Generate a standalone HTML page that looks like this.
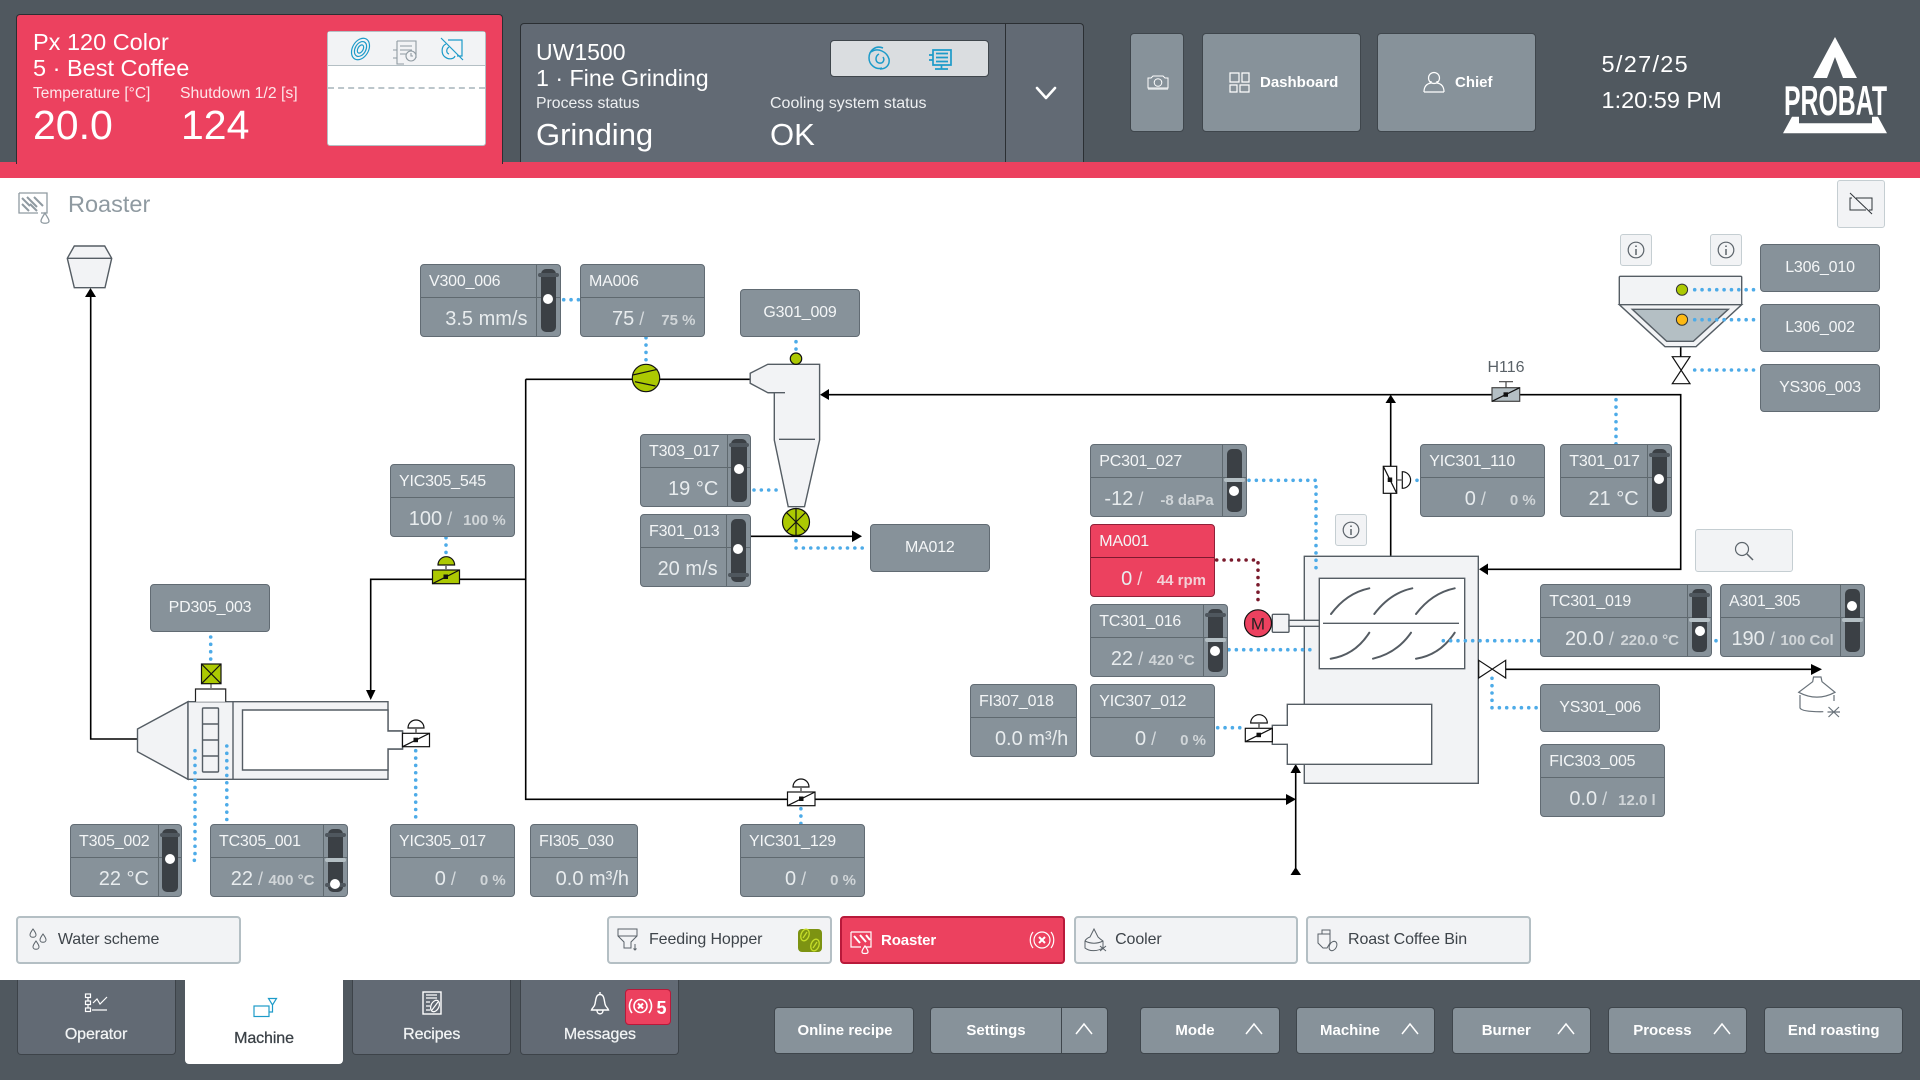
<!DOCTYPE html>
<html><head><meta charset="utf-8"><title>Roaster</title>
<style>
*{box-sizing:border-box}
html,body{margin:0;padding:0;width:1920px;height:1080px;overflow:hidden;background:#fff;font-family:"Liberation Sans",sans-serif}
.a{position:absolute}
.x{position:absolute;white-space:nowrap;line-height:1}
#dia,#ico{position:absolute;left:0;top:0;width:1920px;height:1080px}
#dia{z-index:1}#ico{z-index:5;pointer-events:none}
.p{position:absolute;z-index:2;height:72.5px;background:#87929a;border:1px solid #616b73;border-radius:4px;color:#f4f6f7}
.p .t{height:33px;border-bottom:1px solid #5f696f;padding-left:8px;font-size:16px;letter-spacing:-.2px;line-height:33px;white-space:nowrap}
.p .v{position:absolute;right:8px;top:35px;line-height:38px;font-size:20px;color:#e8ecee;white-space:nowrap}
.p.s .v{right:32px}
.v i{font-style:normal;font-size:18px;color:#d4d9dc;margin-left:5px}
.v b{display:inline-block;text-align:right;font-size:15px;color:#d0d5d8;font-weight:bold}
.p.r{background:#ec415f;border-color:#8f2038}
.p.r .t{border-color:#7c1a30}
.p.r .v b{color:#f3d0d6}.p.r .v i{color:#f6d5da}
.sb{position:absolute;right:0;top:0;bottom:0;width:23.5px;border-left:1px solid #5f696f}
.tr{position:absolute;left:3.5px;right:3.5px;top:3.5px;bottom:3.5px;background:#3b4045;border-radius:5px}
.dk,.lt{position:absolute;left:-2.5px;right:-2.5px;height:4px;border-radius:2px;background:#4f575e}
.lt{background:#b4bfc4}
.dt{position:absolute;left:50%;width:10px;height:10px;margin-left:-5px;border-radius:50%;background:#fff}
.q{position:absolute;z-index:2;height:48px;background:#87929a;border:1px solid #616b73;border-radius:4px;color:#f4f6f7;font-size:16px;letter-spacing:-.2px;text-align:center;line-height:46px}
.ib{position:absolute;z-index:2;width:31.5px;height:31.5px;background:#f2f3f5;border:1px solid #c5ced2;border-radius:3px}
.tb{position:absolute;z-index:2;top:916px;height:47.5px;background:#f2f3f5;border:2px solid #b4bfc4;border-radius:4px;color:#3e444a;font-size:16px;letter-spacing:-.1px;line-height:44px;white-space:nowrap}
.nav{position:absolute;z-index:2;top:980px;width:159px;height:74.5px;background:#626a74;border:1px solid #3d4349;border-top:0;border-radius:0 0 4px 4px;color:#f2f4f5;font-size:16px;letter-spacing:-.1px;-webkit-text-stroke:.25px currentColor;text-align:center;padding-top:46px;line-height:18px}
.bb{position:absolute;z-index:2;top:1006.5px;height:47px;background:#87929a;border:1px solid #3f464c;border-radius:4px;color:#fff;font-size:15px;font-weight:bold;line-height:46px;white-space:nowrap}
.bb span{position:absolute;top:0;transform:translateX(-50%)}
.hb{position:absolute;z-index:2;top:32.5px;height:99px;background:#87929a;border:1px solid #3f464c;border-radius:4px;color:#fff;font-size:15px;font-weight:bold}
</style></head><body>

<!-- header -->
<div class="a" style="left:0;top:0;width:1920px;height:162px;background:#50585f"></div>
<div class="a" style="left:0;top:162px;width:1920px;height:16px;background:#ec415f"></div>
<div class="a" style="left:16px;top:14px;width:487px;height:150px;background:#ec415f;border:1px solid #2b2f33;border-bottom:0;border-radius:4px 4px 0 0"></div>
<div class="a" style="left:519.5px;top:23px;width:564.5px;height:139px;background:#626a74;border:1px solid #2b2f33;border-bottom:0;border-radius:4px 4px 0 0"></div>
<div class="a" style="left:1005px;top:23px;width:1px;height:139px;background:#2b2f33"></div>

<div class="x" style="left:33px;top:31px;font-size:23.5px;color:#fff">Px 120 Color</div>
<div class="x" style="left:33px;top:57px;font-size:23.5px;color:#fff">5 · Best Coffee</div>
<div class="x" style="left:33px;top:86px;font-size:15.5px;color:#fde6ea">Temperature [°C]</div>
<div class="x" style="left:180px;top:86px;font-size:15.8px;color:#fde6ea">Shutdown 1/2 [s]</div>
<div class="x" style="left:33px;top:105px;font-size:41px;color:#fff">20.0</div>
<div class="x" style="left:181px;top:105px;font-size:41px;color:#fff">124</div>

<div class="a" style="left:326.5px;top:31px;width:159px;height:115px;background:#fff;border:1px solid #b4bfc4;border-radius:3px"></div>
<div class="a" style="left:327.5px;top:32px;width:157px;height:34px;background:#f2f3f5;border-bottom:1.5px solid #b4bfc4"></div>
<div class="a" style="left:327.5px;top:87px;width:157px;border-top:2px dashed #bcc6cb"></div>

<div class="x" style="left:536px;top:41px;font-size:23px;color:#fff">UW1500</div>
<div class="x" style="left:536px;top:67px;font-size:23.2px;color:#fff">1 · Fine Grinding</div>
<div class="x" style="left:536px;top:95.5px;font-size:15.8px;color:#eef0f2">Process status</div>
<div class="x" style="left:770px;top:95.5px;font-size:16px;color:#eef0f2">Cooling system status</div>
<div class="x" style="left:536px;top:119px;font-size:31px;color:#fff">Grinding</div>
<div class="x" style="left:770px;top:119px;font-size:31px;color:#fff">OK</div>
<div class="a" style="left:830px;top:40px;width:158.5px;height:37px;background:#dadde0;border:1px solid #3f464c;border-radius:4px"></div>

<div class="hb" style="left:1130px;width:54px"></div>
<div class="hb" style="left:1201.5px;width:159px"><span class="x" style="left:57.5px;top:41.5px">Dashboard</span></div>
<div class="hb" style="left:1377px;width:159px"><span class="x" style="left:77px;top:41.5px">Chief</span></div>
<div class="x" style="left:1601.5px;top:53px;font-size:23.5px;letter-spacing:1.3px;color:#fff">5/27/25</div>
<div class="x" style="left:1601.5px;top:89px;font-size:23.5px;color:#fff">1:20:59 PM</div>

<!-- title row -->
<div class="x" style="left:68px;top:193px;font-size:23.5px;color:#8f9aa1">Roaster</div>
<div class="a" style="left:1837px;top:180px;width:48px;height:47.5px;background:#f2f3f5;border:1px solid #c5ced2;border-radius:3px"></div>

<!-- diagram -->
<svg id="dia" viewBox="0 0 1920 1080" xmlns="http://www.w3.org/2000/svg">
<g fill="none" stroke="#000" stroke-width="1.6">
<path d="M90.7 296V739H138"/>
<path d="M370.7 691V579.3H525.7"/>
<path d="M525.7 379.3V799.3H1288"/>
<path d="M525.7 379.3H750"/>
<path d="M828 394.7H1680.7V569.3H1488"/>
<path d="M1390.7 400V556.3"/>
<path d="M751 536.3H853"/>
<path d="M1505.7 669.3H1812"/>
<path d="M1295.7 772V875"/>
<path d="M1680.7 346.7V357"/>
</g>
<g fill="#000">
<path d="M85 297L90.5 288L96 297Z"/>
<path d="M366 690H375.5L370.7 700Z"/>
<path d="M829 389L820 394.7L829 400Z"/>
<path d="M852 530.5L862 536.3L852 542Z"/>
<path d="M1385.5 403L1390.7 394.7L1396 403Z"/>
<path d="M1488 563.5L1479 569.3L1488 575Z"/>
<path d="M1811 664L1822 669.3L1811 675Z"/>
<path d="M1286 794L1296 799.3L1286 805Z"/>
<path d="M1290.5 773L1295.7 764L1301 773Z"/>
<path d="M1290.5 875L1295.7 867L1301 875Z"/>
</g>
<!-- top cone -->
<g fill="#f2f3f5" stroke="#555d64" stroke-width="1.4">
<path d="M74.3 246H104.7L111.7 258.3L105 287.7H74.3L67.3 258.3Z"/>
<path d="M67.3 258.3H111.7" fill="none"/>
<!-- drum -->
<path d="M137.5 729L188 701.7V779.3L137.5 751.7Z"/>
<path d="M188 701.7H388V731H402.5V749H388V779.3H188Z"/>
<path d="M233 701.7V779.3" fill="none"/>
<path d="M388 710H242.5V770H388V749H402.5V731H388Z" fill="#fff"/>
<rect x="202.5" y="708" width="16" height="64" rx="1" fill="none"/>
<path d="M202.5 724H218.5M202.5 740H218.5M202.5 756H218.5" fill="none"/>
<!-- cyclone -->
<path d="M750.2 373.3L767.8 364.3H819.6V440L804.5 506.7H788.2L774.3 440V392.7H767.8L750.2 383.3Z"/>
<path d="M767.8 392.7H785M779 439.3H815" fill="none"/>
<!-- roaster -->
<rect x="1304.3" y="556.3" width="174" height="227"/>
<rect x="1319.3" y="578.3" width="145.4" height="90.4" fill="#fff"/>
<path d="M1323 623.3H1459" fill="none"/>
<path d="M1287.3 704.3H1431.7V764.3H1287.3V744.3H1272.3V725.3H1287.3Z" fill="#fff"/>
<rect x="1272.3" y="614.3" width="16.7" height="18" rx="1"/>
<path d="M1289 620.3H1319.3V626.3H1289Z"/>
<!-- hopper -->
<rect x="1619.3" y="276.3" width="122.4" height="28.4" rx="1"/>
<path d="M1619.3 304.7H1741.7L1696 346.7H1665Z"/>
<path d="M1632.3 309.3H1728.3L1693.3 341.3H1666.7Z" fill="#b4bfc4"/>
</g>
<g fill="none" stroke="#555c63" stroke-width="2" stroke-linecap="round">
<path d="M1331 614Q1346.7 593 1369.3 588.3M1374.3 614Q1390 593 1412.3 588.3M1416 614Q1432 593 1454.7 588.3"/>
<path d="M1330.7 658.7Q1355 655 1369.3 632.7M1373 658.7Q1397 653 1411 632.7M1416 658.7Q1440 655 1454.7 632.7"/>
</g>
<!-- drum hood -->
<path d="M195.5 701.7V689H225.7V701.7" fill="#fff" stroke="#222" stroke-width="1.2"/>
<path d="M211 689V683" stroke="#777" stroke-width="1.5"/>
<g stroke="#111" stroke-width="1.2">
<rect x="201.5" y="664" width="19.5" height="19.7" fill="#acc902"/>
<path d="M201.5 664L221 683.7M221 664L201.5 683.7" fill="none"/>
<!-- green valve -->
<rect x="432.5" y="570" width="27" height="13.7" fill="#acc902"/>
<path d="M432.5 583.7L459.5 570" fill="none"/>
<path d="M438 565A8.3 8.3 0 0 1 454.6 565Z" fill="#acc902"/>
<rect x="443.5" y="574.5" width="4.5" height="4.5" fill="#111" stroke="none"/>
<!-- fan -->
<ellipse cx="646" cy="378" rx="13.7" ry="13.7" fill="#acc902"/>
<path d="M632.6 375L657.5 369.3M635 381.7L655.5 386" fill="none"/>
<!-- rotary -->
<circle cx="796" cy="522" r="13.5" fill="#acc902"/>
<path d="M796 508.5V535.5M786.5 512.5L805.5 531.5M805.5 512.5L786.5 531.5" fill="none"/>
<circle cx="796" cy="358.7" r="5.7" fill="#acc902"/>
<!-- motor -->
<circle cx="1258" cy="623.3" r="13.5" fill="#ec415f"/>
<!-- white valves -->
<rect x="402.5" y="733.3" width="27" height="13.4" fill="#fff"/>
<path d="M402.5 746.7L429.5 733.3" fill="none"/>
<rect x="787.5" y="792" width="27.5" height="13.7" fill="#fff"/>
<path d="M787.5 805.7L815 792" fill="none"/>
<rect x="1245.3" y="728.3" width="27" height="13.4" fill="#fff"/>
<path d="M1245.3 741.7L1272.3 728.3" fill="none"/>
<rect x="1383.3" y="466.3" width="13.4" height="27" fill="#fff"/>
<path d="M1383.3 466.3L1396.7 493.3" fill="none"/>
<path d="M408 728A8 8 0 0 1 424 728ZM793 787A8 8 0 0 1 809 787ZM1250.7 723A8.3 8.3 0 0 1 1267.3 723ZM1402.3 471.7A8.3 8.3 0 0 1 1402.3 488.3Z" fill="#fff"/>
<path d="M1478.7 660.3V678L1505.7 660.3V678Z" fill="#fff"/>
<path d="M1672.3 356.7H1690L1672.3 383.7H1690Z" fill="#fff"/>
<rect x="1492" y="387.7" width="27.7" height="13.6" fill="#b4bfc4" stroke="#444"/>
<path d="M1492 401.3L1519.7 387.7" fill="none"/>
<path d="M1499 381.7H1513M1506 381.7V387.7" fill="none" stroke="#444"/>
<path d="M416 728V733.3M801 787V792M1259 723V728.3M1396.7 480H1402.3M446 565V570" fill="none" stroke="#666" stroke-width="1.6"/>
</g>
<g fill="#111">
<rect x="413.5" y="737.7" width="4.5" height="4.5"/><rect x="799" y="796.5" width="4.5" height="4.5"/><rect x="1256.5" y="732.7" width="4.5" height="4.5"/><rect x="1387.7" y="477.5" width="4.5" height="4.5"/><rect x="1503.5" y="392.3" width="4.5" height="4.5"/>
</g>
<circle cx="1682" cy="289.7" r="5.6" fill="#acc902" stroke="#333"/>
<circle cx="1682" cy="319.7" r="5.6" fill="#fdb913" stroke="#333"/>
<!-- bin -->
<g fill="none" stroke="#69727a" stroke-width="1.2">
<path d="M1812.7 681.7L1813.5 677H1821L1822 681.7L1835 692.3Q1817 702 1798.7 692.3Z"/>
<path d="M1800 695V708Q1802 712 1823.3 711.7M1834 695V701"/>
<path d="M1828.5 707L1839 717M1839 707L1828.5 717M1827.5 712H1840"/>
</g>
<!-- dotted -->
<g fill="none" stroke="#4dabe8" stroke-width="3.6" stroke-linecap="round" stroke-dasharray="0 7.35">
<path d="M210.7 637V660"/>
<path d="M195 750.7V860.3H187"/>
<path d="M226.8 746V820"/>
<path d="M415.7 750.7V824"/>
<path d="M446 537.7V553"/>
<path d="M563.7 299.7H580"/>
<path d="M646 337.7V360"/>
<path d="M796 341.7V350"/>
<path d="M754 490H781"/>
<path d="M796 540.7V548H866"/>
<path d="M1249 480.3H1316V568.3"/>
<path d="M1229 649.7H1311"/>
<path d="M1443.3 640.7H1540"/>
<path d="M1217.7 727.7H1242"/>
<path d="M1492 678.3V707.7H1537"/>
<path d="M800.9 808.7V824"/>
<path d="M1417 480.3H1418"/>
<path d="M1694.7 289.7H1760"/>
<path d="M1694.7 319.7H1757"/>
<path d="M1694.7 370H1757"/>
<path d="M1616 399.7V444"/>
<path d="M1716 640.7H1717"/>
</g>
<path d="M1216.7 560H1258V604.3" fill="none" stroke="#7a1a2c" stroke-width="3.6" stroke-linecap="round" stroke-dasharray="0 7.35"/>
<text x="1258" y="629.5" font-size="17" text-anchor="middle" fill="#222" font-family="Liberation Sans, sans-serif">M</text>
<text x="1506" y="372" font-size="16" text-anchor="middle" fill="#5a6268" font-family="Liberation Sans, sans-serif">H116</text>
</svg>

<!-- panels -->
<div class="p s" style="left:420px;top:264px;width:140.5px"><div class="t">V300_006</div><div class="v">3.5 mm/s</div><div class="sb"><div class="tr"><div class="dk" style="top:4.5px"></div><div class="dt" style="top:25.5px"></div></div></div></div>
<div class="p" style="left:580px;top:264px;width:124.5px"><div class="t">MA006</div><div class="v">75<i>/</i><b style="margin-left:17px">75 %</b></div></div>
<div class="q" style="left:740px;top:289px;width:120px">G301_009</div>
<div class="p" style="left:390px;top:464px;width:124.7px"><div class="t">YIC305_545</div><div class="v">100<i>/</i><b style="margin-left:11px">100 %</b></div></div>
<div class="p s" style="left:640px;top:434.3px;width:111.3px"><div class="t">T303_017</div><div class="v">19 °C</div><div class="sb"><div class="tr"><div class="dk" style="top:4.5px"></div><div class="dt" style="top:25.5px"></div></div></div></div>
<div class="p s" style="left:640px;top:514.3px;width:110.6px"><div class="t">F301_013</div><div class="v">20 m/s</div><div class="sb"><div class="tr"><div class="dk" style="top:54.5px"></div><div class="dt" style="top:25.5px"></div></div></div></div>
<div class="q" style="left:870px;top:524px;width:119.6px">MA012</div>
<div class="q" style="left:150px;top:584px;width:120px">PD305_003</div>

<div class="p s" style="left:70px;top:824.3px;width:112px"><div class="t">T305_002</div><div class="v">22 °C</div><div class="sb"><div class="tr"><div class="dk" style="top:4.5px"></div><div class="dt" style="top:25.5px"></div></div></div></div>
<div class="p s" style="left:210px;top:824.3px;width:137.5px"><div class="t">TC305_001</div><div class="v">22<i>/</i><b style="margin-left:5.5px">400 °C</b></div><div class="sb"><div class="tr"><div class="dk" style="top:4.5px"></div><div class="lt" style="top:29.5px"></div><div class="dk" style="top:54.5px"></div><div class="dt" style="top:50.5px"></div></div></div></div>
<div class="p" style="left:390px;top:824.3px;width:124.7px"><div class="t">YIC305_017</div><div class="v">0<i>/</i><b style="margin-left:24px">0 %</b></div></div>
<div class="p" style="left:530px;top:824.3px;width:108px"><div class="t">FI305_030</div><div class="v">0.0 m³/h</div></div>
<div class="p" style="left:740px;top:824.3px;width:125px"><div class="t">YIC301_129</div><div class="v">0<i>/</i><b style="margin-left:24px">0 %</b></div></div>

<div class="p s" style="left:1090.3px;top:444.3px;width:156.4px"><div class="t">PC301_027</div><div class="v">-12<i>/</i><b style="margin-left:17px">-8 daPa</b></div><div class="sb"><div class="tr"><div class="lt" style="top:29.5px"></div><div class="dt" style="top:37.5px"></div></div></div></div>
<div class="p r" style="left:1090.3px;top:524.3px;width:124.7px"><div class="t">MA001</div><div class="v">0<i>/</i><b style="margin-left:14.5px">44 rpm</b></div></div>
<div class="p s" style="left:1090.3px;top:604.3px;width:137.4px"><div class="t">TC301_016</div><div class="v">22<i>/</i><b style="margin-left:5.5px">420 °C</b></div><div class="sb"><div class="tr"><div class="dk" style="top:4.5px"></div><div class="lt" style="top:29.5px"></div><div class="dt" style="top:37.5px"></div></div></div></div>
<div class="p" style="left:970px;top:684.3px;width:107.3px"><div class="t">FI307_018</div><div class="v">0.0 m³/h</div></div>
<div class="p" style="left:1090.3px;top:684.3px;width:124.7px"><div class="t">YIC307_012</div><div class="v">0<i>/</i><b style="margin-left:24px">0 %</b></div></div>
<div class="p" style="left:1420.3px;top:444.3px;width:124.4px"><div class="t">YIC301_110</div><div class="v">0<i>/</i><b style="margin-left:24px">0 %</b></div></div>
<div class="p s" style="left:1560.3px;top:444.3px;width:111.4px"><div class="t">T301_017</div><div class="v">21 °C</div><div class="sb"><div class="tr"><div class="dk" style="top:4.5px"></div><div class="dt" style="top:25.5px"></div></div></div></div>
<div class="p s" style="left:1540.3px;top:584.3px;width:171.7px"><div class="t">TC301_019</div><div class="v">20.0<i>/</i><b style="margin-left:6.5px">220.0 °C</b></div><div class="sb"><div class="tr"><div class="dk" style="top:4.5px"></div><div class="lt" style="top:29.5px"></div><div class="dt" style="top:37.5px"></div></div></div></div>
<div class="p s" style="left:1720px;top:584.3px;width:144.7px"><div class="t">A301_305</div><div class="v" style="right:30px">190<i>/</i><b style="margin-left:5.5px">100 Col</b></div><div class="sb"><div class="tr"><div class="lt" style="top:29.5px"></div><div class="dt" style="top:12.5px"></div></div></div></div>
<div class="q" style="left:1540.3px;top:684.3px;width:119.7px">YS301_006</div>
<div class="p" style="left:1540.3px;top:744.3px;width:124.4px"><div class="t">FIC303_005</div><div class="v">0.0<i>/</i><b style="margin-left:11px">12.0 l</b></div></div>
<div class="q" style="left:1760.3px;top:244px;width:119.4px">L306_010</div>
<div class="q" style="left:1760.3px;top:304.3px;width:119.4px">L306_002</div>
<div class="q" style="left:1760.3px;top:364.3px;width:119.4px">YS306_003</div>

<div class="ib" style="left:1335.3px;top:514.3px"></div>
<div class="ib" style="left:1620.3px;top:234.3px"></div>
<div class="ib" style="left:1710.3px;top:234.3px"></div>
<div class="a" style="z-index:2;left:1695px;top:529.3px;width:98px;height:43px;background:#f2f3f5;border:1px solid #c5ced2;border-radius:3px"></div>

<!-- sub tabs -->
<div class="tb" style="left:16.4px;width:224.6px;padding-left:39.5px">Water scheme</div>
<div class="tb" style="left:607px;width:224.7px;padding-left:40px">Feeding Hopper</div>
<div class="a" style="z-index:3;left:798px;top:928.5px;width:24px;height:23.5px;background:#7d9312;border-radius:4px"></div>
<div class="tb" style="left:840px;width:225px;padding-left:39px;background:#ec415f;border-color:#b8193a;color:#fff;font-weight:bold;font-size:15px;line-height:45px">Roaster</div>
<div class="tb" style="left:1073.6px;width:224px;padding-left:39.5px">Cooler</div>
<div class="tb" style="left:1306px;width:224.6px;padding-left:40px">Roast Coffee Bin</div>

<!-- bottom bar -->
<div class="a" style="left:0;top:980px;width:1920px;height:100px;background:#50585f"></div>
<div class="nav" style="left:16.5px">Operator</div>
<div class="nav" style="left:185px;width:158px;height:83.5px;background:#fff;color:#3a4046;border-color:#fff;padding-top:50px">Machine</div>
<div class="nav" style="left:352.2px">Recipes</div>
<div class="nav" style="left:520.4px">Messages</div>
<div class="a" style="z-index:3;left:625px;top:989px;width:46px;height:36px;background:#ec415f;border:1px solid #b8193a;border-radius:4px"></div>
<div class="x" style="z-index:6;left:656.5px;top:998.5px;font-size:18px;font-weight:bold;color:#fff">5</div>

<div class="bb" style="left:774px;width:140px"><span style="left:70px">Online recipe</span></div>
<div class="bb" style="left:930px;width:178px"><span style="left:65px">Settings</span><div class="a" style="left:130px;top:0;bottom:0;width:1px;background:#3f464c"></div></div>
<div class="bb" style="left:1140px;width:140px"><span style="left:54px">Mode</span></div>
<div class="bb" style="left:1296px;width:139px"><span style="left:53px">Machine</span></div>
<div class="bb" style="left:1452.3px;width:139px"><span style="left:53px">Burner</span></div>
<div class="bb" style="left:1608.4px;width:139px"><span style="left:53px">Process</span></div>
<div class="bb" style="left:1763.7px;width:139.3px"><span style="left:69px">End roasting</span></div>

<!-- icons overlay -->
<svg id="ico" viewBox="0 0 1920 1080" xmlns="http://www.w3.org/2000/svg">
<g fill="none" stroke="#fff" stroke-width="2.6" stroke-linecap="round" stroke-linejoin="round"><path d="M1037 88L1046 98L1055 88"/></g>
<!-- chevrons up -->
<g fill="none" stroke="#fff" stroke-width="1.5">
<path d="M1076 1034L1084 1024L1092 1034M1246 1034L1254 1024L1262 1034M1402 1034L1410 1024L1418 1034M1558 1034L1566 1024L1574 1034M1714 1034L1722 1024L1730 1034"/>
</g>
<!-- mini panel icons -->
<g fill="none" stroke="#1d9bc9" stroke-width="1.2">
<g transform="rotate(30 360.5 49)">
<ellipse cx="360.5" cy="49" rx="8" ry="11.5"/>
<ellipse cx="360.5" cy="49" rx="5.3" ry="8"/>
<ellipse cx="360.5" cy="49" rx="2.6" ry="4.5"/>
</g>
<path d="M441 38L463 60M448 40H462V56H457"/>
<path d="M446 44C441 46 441 54 445 57C449 60 454 59 455 56M449 47C446 49 446 53 449 54"/>
<g stroke-width="1.5">
<path d="M883 48C876 45 869 50 869 58C869 65 876 70 882 68M871 52C878 47 887 52 889 59C890 65 886 69 880 69"/>
<path d="M879 54C875 56 875 62 879 63C883 64 885 60 883 57"/>
</g>
<g stroke-width="1.7">
<path d="M933 50H951V65H933ZM936 53.5H948M936 57.5H948M936 61.5H948M941.5 65V69M935 69H948M929 55H933V60H929"/>
</g>
</g>
<g fill="none" stroke="#8f9aa1" stroke-width="1.1">
<path d="M397 41H416V58M397 41V64H404M400 46H412M400 50H412M400 54H412M393 50H397M393 58H397"/>
<circle cx="411" cy="56" r="5" fill="#f2f3f5"/><path d="M411 53V56H413"/>
</g>
<!-- header button icons -->
<g fill="none" stroke="#fff" stroke-width="1">
<path d="M1148 78H1151L1153 76H1163L1165 78H1168V88H1148Z"/><circle cx="1158" cy="82.5" r="3.8"/><path d="M1148 89H1168" stroke-width="1.6" stroke="#dfe3e5"/>
</g>
<g fill="none" stroke="#fff" stroke-width="1.2">
<path d="M1230 73H1239V82H1230ZM1242 73H1249V82H1242ZM1230 85H1237V92H1230ZM1240 85H1249V92H1240Z"/>
<circle cx="1434" cy="78" r="5.5"/><path d="M1424 92C1424 85 1428 83.5 1431 83L1431 81M1444 92C1444 85 1440 83.5 1437 83L1437 81M1424 92H1444"/>
</g>
<!-- logo -->
<g fill="#fff">
<path d="M1835 37L1857 78H1843L1835 57L1827 78H1813Z"/>
<path d="M1792 116.7L1783 133.3H1887L1878 116.7H1872V123.3H1799V116.7Z"/>
<text x="1784" y="115" font-size="42" font-weight="bold" font-family="Liberation Sans Narrow, Liberation Sans, sans-serif" textLength="103" lengthAdjust="spacingAndGlyphs">PROBAT</text>
</g>
<!-- title icons -->
<g fill="none" stroke="#8f9aa1" stroke-width="1.3">
<path d="M19 193H47V213H41M19 193V213H38"/>
<path d="M22 198L30 206M27 197L37 207M34 197L43 206M22 204L29 211M30 204L37 211" stroke-width="2"/>
<path d="M45 213C42 218 41 219 41 221C41 224 49 224 49 221C49 219 47 217 45 213Z"/>
</g>
<g fill="none" stroke="#2f3439" stroke-width="1">
<path d="M1852 198H1850V210H1866M1856 198H1872V210H1869"/>
<path d="M1850 193L1872 214"/>
</g>
<!-- info -->
<g fill="none" stroke="#5c646b" stroke-width="1.2">
<circle cx="1351" cy="530" r="7.8"/><circle cx="1636" cy="250" r="7.8"/><circle cx="1726" cy="250" r="7.8"/>
<path d="M1351 529V535M1636 249V255M1726 249V255" stroke-width="1.5"/>
<path d="M1351 525.5V527M1636 245.5V247M1726 245.5V247" stroke-width="1.6"/>
<circle cx="1742" cy="549" r="6.5"/><path d="M1747 554L1753 560" stroke-width="1.5"/>
</g>
<!-- sub tab icons -->
<g fill="none" stroke="#5a6269" stroke-width="1">
<path d="M33 929C31 932 30 933 30 935C30 938 36 938 36 935C36 933 35 932 33 929Z"/>
<path d="M43 934C41 937 40 938 40 940C40 943 46 943 46 940C46 938 45 937 43 934Z"/>
<path d="M36 941C34 944 33 945 33 947C33 950 39 950 39 947C39 945 38 944 36 941Z"/>
<path d="M618 929H637V936L631 942V948H624V942L618 936ZM618 936H637M635 944V950M633.5 948.5L635 950L636.5 948.5"/>
<path d="M1094 929L1090 937C1087 938 1086 939 1085 941V948C1090 952 1098 951 1103 948V941C1100 939 1099 938 1098 937L1094 929ZM1085 941C1091 944 1097 944 1103 941"/>
<path d="M1100 946L1106 951M1106 946L1100 951"/>
<path d="M1322 930H1330V943L1327 948H1323L1318 943V934H1322V930ZM1322 934H1330"/>
<ellipse cx="1333" cy="946" rx="3.5" ry="5" transform="rotate(30 1333 946)"/>
</g>
<g fill="none" stroke="#fff" stroke-width="1.2">
<path d="M851 932H871V947H866M851 932V947H861"/>
<path d="M854 936L860 943M860 935L866 942M866 935L870 940" stroke-width="2"/>
<path d="M865 946C863 949 862 950 862 952C862 954 868 954 868 952C868 950 867 949 865 946Z"/>
<circle cx="1042" cy="940" r="8"/><path d="M1033 932A13 13 0 0 0 1033 948M1051 932A13 13 0 0 1 1051 948"/>
<path d="M1039 937L1045 943M1045 937L1039 943" stroke-width="2"/>
</g>
<!-- bean badge -->
<g fill="none" stroke="#c6de2a" stroke-width="1.3">
<ellipse cx="805" cy="935" rx="4" ry="6" transform="rotate(20 805 935)"/>
<ellipse cx="815" cy="945" rx="4" ry="6" transform="rotate(20 815 945)"/>
<path d="M803 938L807 932M813 948L817 942"/>
</g>
<!-- nav icons -->
<g fill="none" stroke="#fff" stroke-width="1.2">
<rect x="85.5" y="994" width="5" height="3.5"/><rect x="85.5" y="1001" width="5" height="3.5"/><rect x="85.5" y="1008" width="5" height="3.5"/>
<path d="M88 997.5V1001M88 1004.5V1008M92 1010H107M93 1003L97 999L100 1004L107 997"/>
<rect x="423" y="992" width="18" height="22" stroke-width="1.4"/>
<path d="M426 995H437M426 998H437M426 1002H430M426 1006H430M426 1010H430" stroke-width="1.2"/>
<ellipse cx="435" cy="1006" rx="4" ry="6" transform="rotate(25 435 1006)"/><path d="M432 1010L438 1002"/>
<path stroke-width="1.4" d="M600 994.5C596 994.5 596 999 595 1004C594.5 1007 592 1008 591.5 1010H608.5C608 1008 605.5 1007 605 1004C604 999 604 994.5 600 994.5ZM597 1010.5C597 1015 603 1015 603 1010.5M600 992V994.5"/>
<circle cx="640.5" cy="1006" r="6.5" stroke-width="1.6"/>
<path d="M632 999A11 11 0 0 0 632 1013M649 999A11 11 0 0 1 649 1013" stroke-width="1.6"/>
<path d="M638 1003.5L643 1008.5M643 1003.5L638 1008.5" stroke-width="2"/>
</g>
<g fill="none" stroke="#1d9bc9" stroke-width="1.2">
<rect x="254" y="1006" width="15" height="10.5"/>
<path d="M269 1012H272.5V1005M268.5 998.5H276.5L272.5 1005Z"/>
</g>
</svg>
</body></html>
